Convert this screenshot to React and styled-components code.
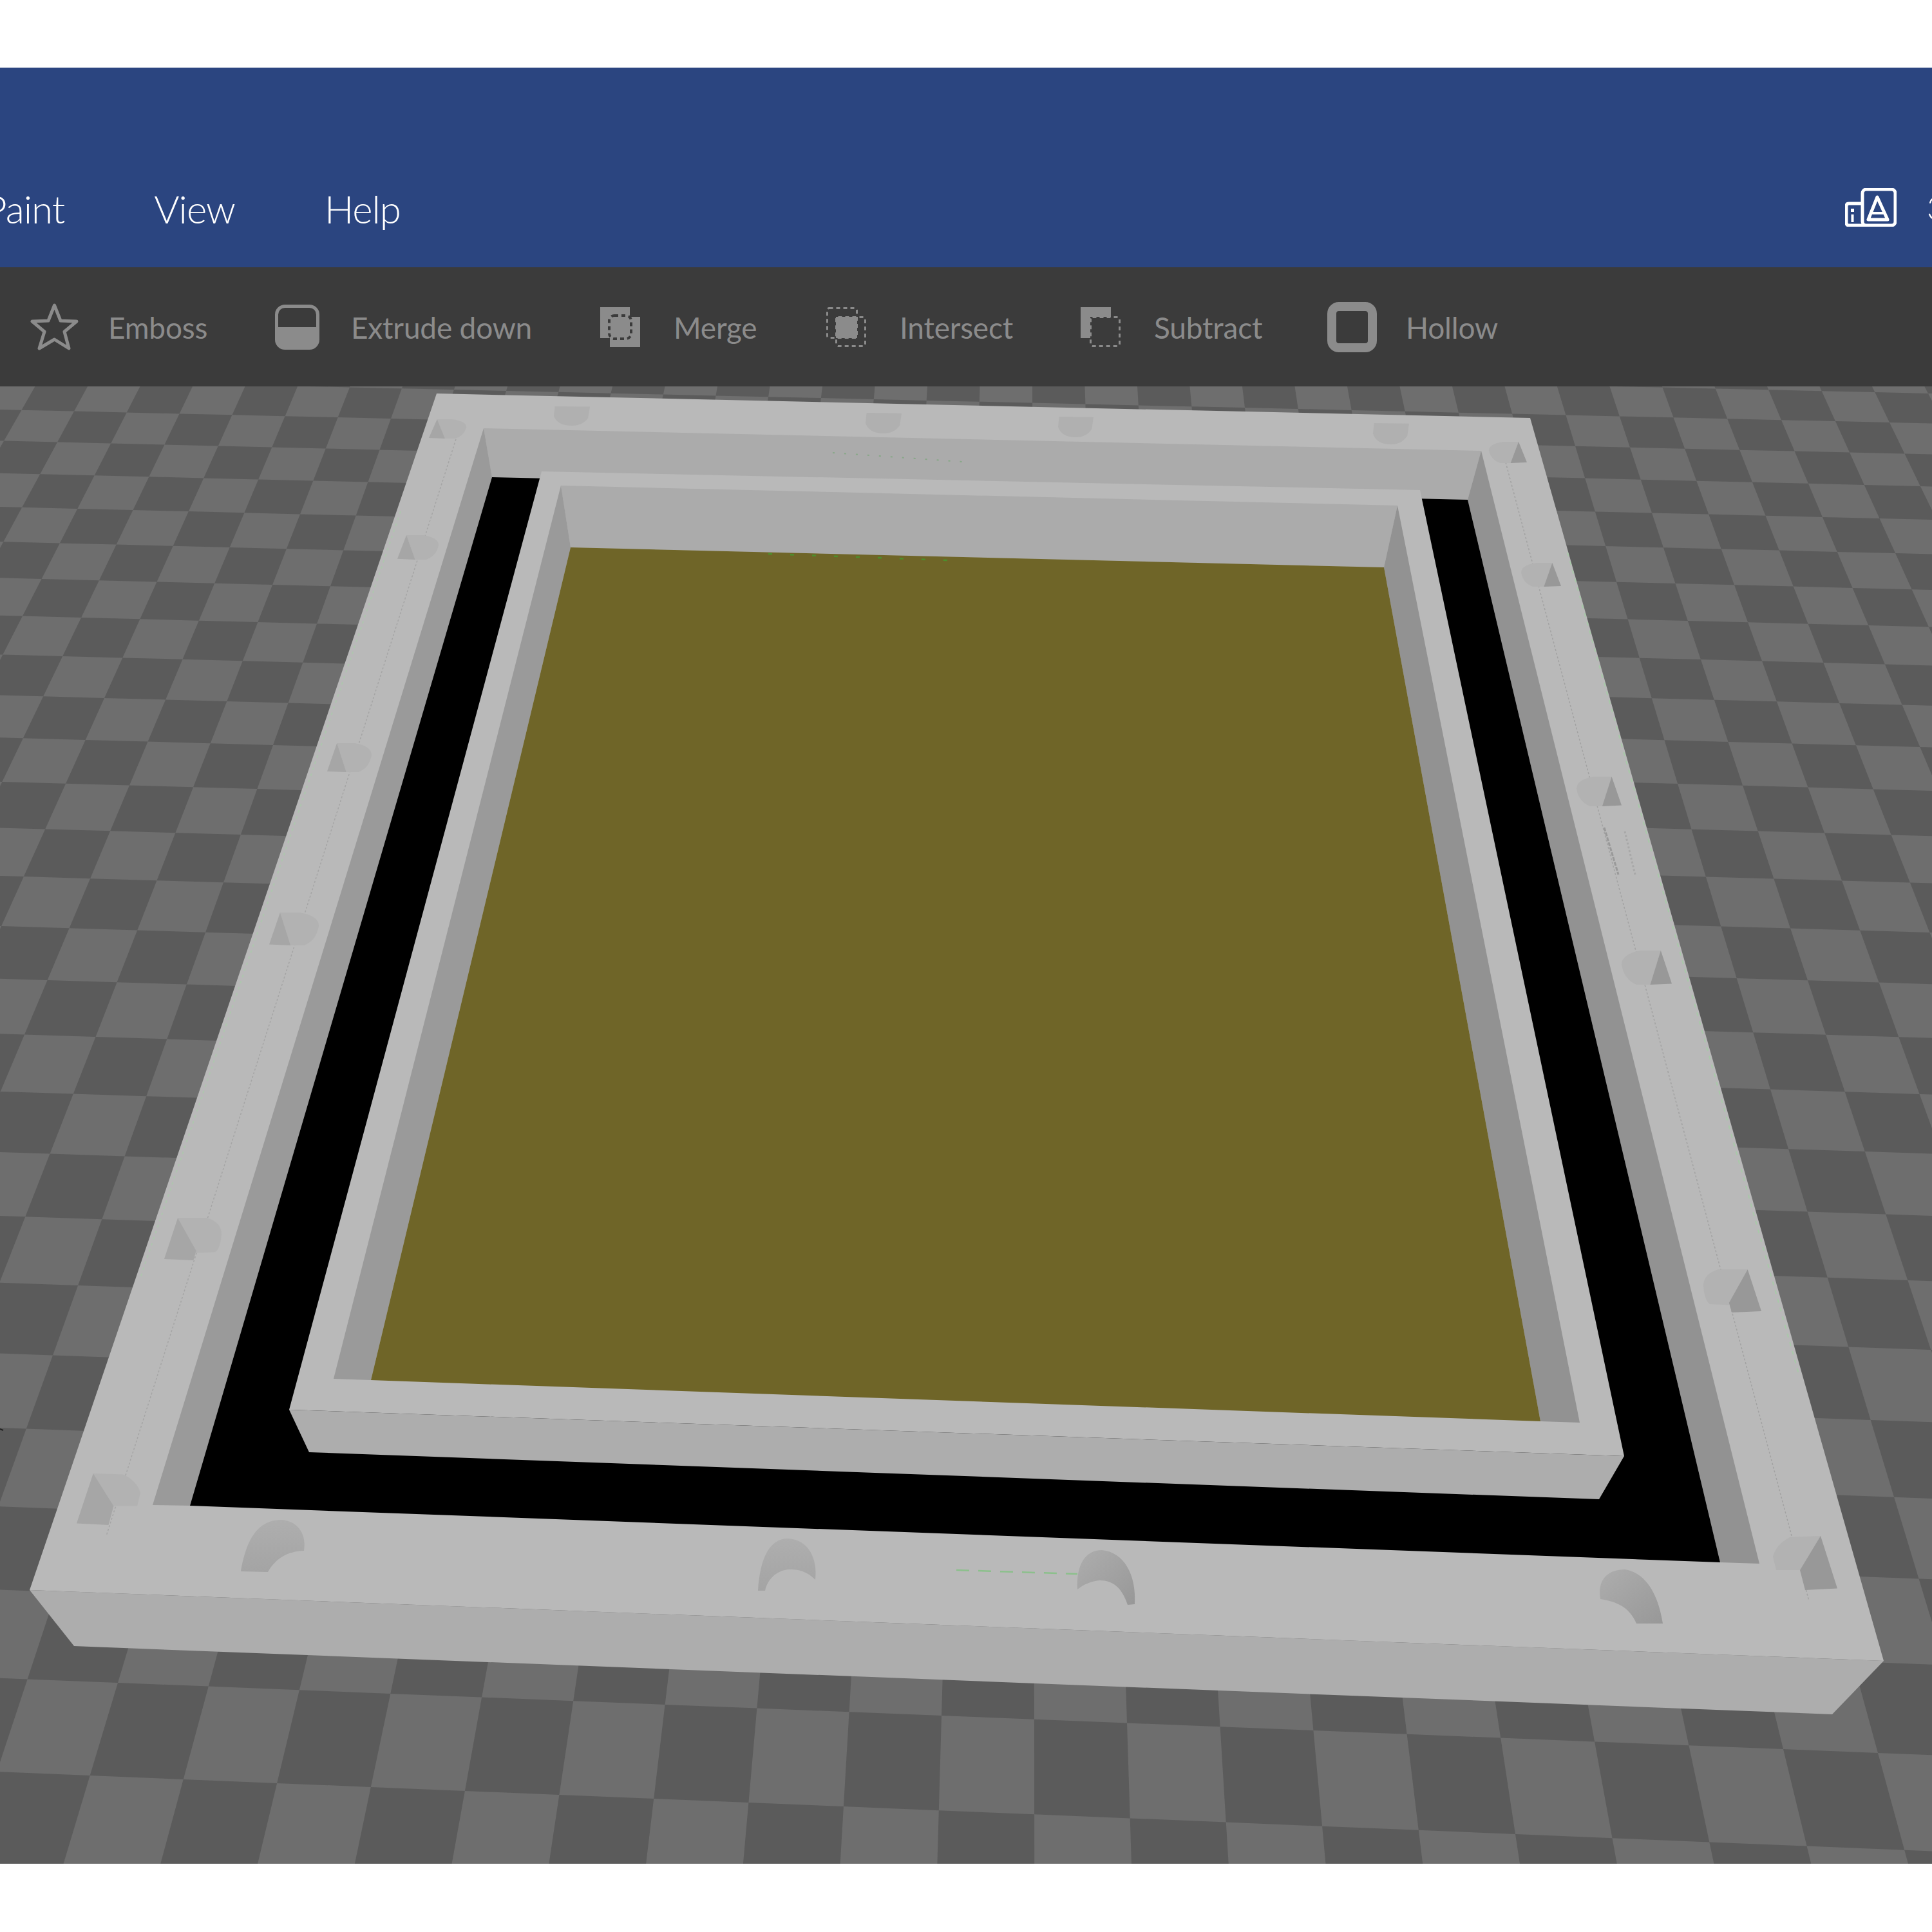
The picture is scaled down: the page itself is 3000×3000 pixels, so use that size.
import React from 'react';
import styled, { createGlobalStyle } from 'styled-components';

const GlobalStyle = createGlobalStyle`
  html, body {
    margin: 0;
    padding: 0;
    background: #ffffff;
  }
`;

const Page = styled.div`
  width: 3000px;
  height: 3000px;
  padding-top: 105px;
  box-sizing: border-box;
  overflow: hidden;
  background: #ffffff;
  font-family: "Lato", "Open Sans", "Liberation Sans", sans-serif;
`;

// Blue title + menu band
const MenuBar = styled.div`
  height: 310px;
  box-sizing: border-box;
  padding-top: 183px;
  background: #2b4580;
  display: flex;
  align-items: flex-start;
  color: #ffffff;
`;

const MenuItems = styled.div`
  display: flex;
  gap: 139px;
  margin-left: -24px;
`;

const MenuItem = styled.span`
  font-size: 60px;
  font-weight: 300;
  line-height: 72px;
  letter-spacing: -1px;
`;

const AppBadge = styled.div`
  margin-left: auto;
  margin-right: -92px;
  margin-top: 4px;
  display: flex;
  align-items: flex-start;
  gap: 47px;
`;

const AppBadgeIcon = styled.svg`
  width: 80px;
  height: 60px;
  display: block;
`;

const AppBadgeText = styled.span`
  font-size: 50px;
  font-weight: 300;
  line-height: 60px;
  width: 100px;
`;

// Dark tool strip
const Toolbar = styled.div`
  height: 185px;
  box-sizing: border-box;
  padding-left: 46px;
  background: #3b3b3b;
  display: flex;
  align-items: center;
  color: #8b8b8b;
`;

const Tool = styled.div`
  width: ${(p) => p.$slot}px;
  flex: none;
  display: flex;
  align-items: center;
  gap: ${(p) => p.$gap}px;
`;

const ToolLabel = styled.span`
  font-size: 46px;
  font-weight: 400;
  line-height: 60px;
  letter-spacing: -0.2px;
  padding-top: 2px;
`;

const ToolIcon = styled.svg`
  flex: none;
  display: block;
  width: ${(p) => p.$w}px;
  height: ${(p) => p.$h}px;
`;

const Viewport = styled.svg`
  display: block;
  width: 3000px;
  height: 2294px;
`;

// Floor grid: homography from grid (u, v) to screen, fitted on four measured corners
const solveHomography = (pairs) => {
  const m = [];
  pairs.forEach(([u, v, x, y]) => {
    m.push([u, v, 1, 0, 0, 0, -u * x, -v * x, x]);
    m.push([0, 0, 0, u, v, 1, -u * y, -v * y, y]);
  });
  for (let i = 0; i < 8; i++) {
    let best = i;
    for (let r = i + 1; r < 8; r++) if (Math.abs(m[r][i]) > Math.abs(m[best][i])) best = r;
    [m[i], m[best]] = [m[best], m[i]];
    for (let r = 0; r < 8; r++) {
      if (r === i) continue;
      const f = m[r][i] / m[i][i];
      for (let c = i; c < 9; c++) m[r][c] -= f * m[i][c];
    }
  }
  return m.map((row, i) => row[8] / row[i]);
};

const H = solveHomography([
  [0, 0, 183, 2613],
  [19, 0, 2916, 2722],
  [-2, 24, 607, 650],
  [26, 25, 2934, 656],
]);

const project = (u, v) => {
  const w = H[6] * u + H[7] * v + 1;
  return `${((H[0] * u + H[1] * v + H[2]) / w).toFixed(1)},${((H[3] * u + H[4] * v + H[5]) / w).toFixed(1)}`;
};

const darkCells = [];
for (let u = -14; u < 32; u++) {
  for (let v = -4; v < 28; v++) {
    if ((u + v + 400) % 2 === 1) {
      darkCells.push([project(u, v), project(u + 1, v), project(u + 1, v + 1), project(u, v + 1)].join(' '));
    }
  }
}

const TOP = '#b9b9b9';
const FRONT = '#adadad';
const LEFT_WALL = '#9a9a9a';
const RIGHT_WALL = '#929292';
const BACK_WALL = '#ababab';

const faces = [
  // outer frame
  [TOP, '678,611 2376,649 2925,2579 46,2469'],
  [FRONT, '46,2469 2925,2579 2845,2662 115,2556'],
  [BACK_WALL, '751,665 2300,700 2279,776 764,741'],
  [LEFT_WALL, '751,665 764,741 295,2338 237,2337'],
  [RIGHT_WALL, '2300,700 2279,776 2671,2426 2732,2428'],
  ['#000000', '764,741 2279,776 2671,2426 295,2338'],
  // inner tray
  [FRONT, '449,2189 2522,2261 2483,2328 480,2255'],
  [TOP, '841,732 2205,761 2522,2261 449,2189'],
  [BACK_WALL, '871,754 2170,785 2149,881 886,850'],
  [LEFT_WALL, '871,754 886,850 576,2143 518,2141'],
  [RIGHT_WALL, '2170,785 2149,881 2392,2207 2453,2209'],
  ['#6f6528', '886,850 2149,881 2392,2207 576,2143'],
];

// side notches: x, y, w, h, kind
const leftNotches = [
  [666, 651, 58, 30], [617, 831, 64, 38], [508, 1154, 69, 45], [418, 1417, 77, 51],
  [255, 1890, 89, 67, 'mid'], [119, 2288, 99, 80, 'deep'],
];
const rightNotches = [
  [2312, 686, 59, 33], [2362, 874, 62, 37], [2448, 1206, 70, 46], [2518, 1476, 78, 53],
  [2645, 1970, 90, 68, 'mid'], [2753, 2385, 100, 84, 'deep'],
];
const topNotches = [
  [860, 631, 56, 30], [1344, 641, 56, 32], [1643, 647, 55, 32], [2132, 657, 56, 33],
];

const NOTCH = {
  flat: {
    tri: '.22,0 .43,1 0,.97',
    cap: 'M.22 0 L.62 0 Q1 .1 1 .41 Q.95 .85 .7 1 L.43 1 Z',
  },
  mid: {
    tri: '.236,.02 .557,.78 .51,1 0,.97',
    cap: 'M.236 .02 L.75 .02 Q1 .12 1 .4 Q.98 .72 .89 .81 L.557 .83 Z',
  },
  deep: {
    tri: '.26,0 .58,.63 .5,1 0,.97',
    cap: 'M.26 0 L.73 .02 Q.95 .15 1 .38 L.95 .63 L.58 .63 Z',
  },
};

const Notch = ({ x, y, w, h, kind, mirror, triFill }) => {
  const shape = NOTCH[kind || 'flat'];
  const transform = mirror
    ? `translate(${x + w} ${y}) scale(${-w} ${h})`
    : `translate(${x} ${y}) scale(${w} ${h})`;
  return (
    <g transform={transform}>
      <path d={shape.cap} fill="#b2b2b2" />
      <polygon points={shape.tri} fill={triFill} />
    </g>
  );
};

const frontArches = [
  ['url(#archA)', 'M374 2440 C381 2400 395 2360 437 2360 C465 2362 476 2385 472 2408 C446 2409 428 2420 416 2441 Z'],
  ['url(#archA)', 'M1177 2470 C1180 2420 1195 2389 1223 2389 C1255 2390 1270 2420 1266 2453 C1250 2437 1235 2437 1223 2437 C1205 2440 1192 2452 1188 2470 Z'],
  ['url(#archB)', 'M1673 2468 C1671 2430 1685 2407 1711 2407 C1745 2410 1765 2445 1762 2491 L1751 2492 C1742 2465 1728 2454 1708 2454 C1695 2455 1683 2460 1673 2468 Z'],
  ['url(#archB)', 'M2485 2483 C2480 2455 2495 2437 2523 2437 C2555 2442 2575 2475 2582 2521 L2541 2521 C2530 2495 2510 2487 2485 2483 Z'],
];

const guideLines = [
  // [x1, y1, x2, y2, colour, width, dash]
  [708, 682, 165, 2385, '#a5a5a5', 1.5, '3 3'],
  [2338, 718, 2809, 2486, '#a2a2a2', 1.5, '3 3'],
  [622, 794, 217, 1987, '#aec6ae', 2, '4 6'],
  [2434, 858, 2794, 2137, '#a9c9a9', 2, '6 8'],
  [1485, 2438, 1673, 2444, '#8cc08c', 2.5, '20 14'],
  [1293, 703, 1507, 718, '#88a888', 2, '3 15'],
  [1193, 860, 1499, 871, '#4d8f2c', 2.5, '6 28'],
  [2491, 1285, 2513, 1358, '#999999', 3, '6 2'],
  [2523, 1291, 2539, 1358, '#a8a8a8', 3, '3 3'],
  [0, 2219, 5, 2221, '#222222', 2, 'none'],
];

const GREY = '#8b8b8b';
const BAR = '#3b3b3b';

const StarIcon = () => (
  <ToolIcon $w={77} $h={75} viewBox="0 0 77 75">
    <polygon
      points="38.5,4 48,28 73,29 54,45 61,71 38.5,57 15,71 23,45 4,29 29,28"
      fill="none"
      stroke={GREY}
      strokeWidth="5"
      strokeLinejoin="round"
    />
  </ToolIcon>
);

const ExtrudeIcon = () => (
  <ToolIcon $w={69} $h={70} viewBox="0 0 69 70">
    <path d="M2 35 H67 V56 Q67 68 55 68 H14 Q2 68 2 56 Z" fill={GREY} />
    <rect x="2.5" y="2.5" width="64" height="65" rx="13" fill="none" stroke={GREY} strokeWidth="5" />
  </ToolIcon>
);

const MergeIcon = () => (
  <ToolIcon $w={62} $h={62} viewBox="0 0 62 62">
    <rect x="0" y="0" width="46" height="48" fill={GREY} />
    <rect x="15" y="15" width="47" height="47" fill={GREY} />
    <rect x="14" y="13" width="34" height="36" rx="8" fill="none" stroke={BAR} strokeWidth="4" strokeDasharray="6 5" />
  </ToolIcon>
);

const IntersectIcon = () => (
  <ToolIcon $w={62} $h={62} viewBox="0 0 62 62">
    <rect x="15" y="15" width="33" height="33" fill={GREY} />
    <rect x="1.5" y="1.5" width="46" height="46" rx="3" fill="none" stroke={GREY} strokeWidth="3" strokeDasharray="6 5" />
    <rect x="15.5" y="15.5" width="45" height="45" rx="3" fill="none" stroke={GREY} strokeWidth="3" strokeDasharray="6 5" />
  </ToolIcon>
);

const SubtractIcon = () => (
  <ToolIcon $w={62} $h={62} viewBox="0 0 62 62">
    <path d="M0 0 H47 V15 H15 V48 H0 Z" fill={GREY} />
    <rect x="15.5" y="15.5" width="45" height="45" rx="3" fill="none" stroke={GREY} strokeWidth="3" strokeDasharray="6 5" />
  </ToolIcon>
);

const HollowIcon = () => (
  <ToolIcon $w={77} $h={78} viewBox="0 0 77 78">
    <rect x="7" y="7" width="63" height="64" rx="11" fill="none" stroke={GREY} strokeWidth="14" />
  </ToolIcon>
);

const tools = [
  { label: 'Emboss', icon: <StarIcon />, slot: 381, gap: 45 },
  { label: 'Extrude down', icon: <ExtrudeIcon />, slot: 505, gap: 49 },
  { label: 'Merge', icon: <MergeIcon />, slot: 351, gap: 52 },
  { label: 'Intersect', icon: <IntersectIcon />, slot: 395, gap: 52 },
  { label: 'Subtract', icon: <SubtractIcon />, slot: 383, gap: 52 },
  { label: 'Hollow', icon: <HollowIcon />, slot: 400, gap: 45 },
];

const App = () => (
  <Page>
    <GlobalStyle />
    <MenuBar>
      <MenuItems>
        <MenuItem>Paint</MenuItem>
        <MenuItem>View</MenuItem>
        <MenuItem>Help</MenuItem>
      </MenuItems>
      <AppBadge>
        <AppBadgeIcon viewBox="0 0 80 60">
          <rect x="27" y="2" width="51" height="56" rx="6" fill="none" stroke="#ffffff" strokeWidth="5" />
          <path d="M27 24 H6 Q2 24 2 28 V54 Q2 58 6 58 H30" fill="none" stroke="#ffffff" strokeWidth="5" />
          <rect x="9" y="32" width="5" height="5" fill="#ffffff" />
          <rect x="9.5" y="41" width="4" height="12" fill="#ffffff" />
          <path d="M50 14 L36 49 H66 Z" fill="none" stroke="#ffffff" strokeWidth="5" strokeLinejoin="round" />
          <path d="M42 39 H60" stroke="#ffffff" strokeWidth="4" />
        </AppBadgeIcon>
        <AppBadgeText>3D</AppBadgeText>
      </AppBadge>
    </MenuBar>
    <Toolbar>
      {tools.map((tool) => (
        <Tool key={tool.label} $slot={tool.slot} $gap={tool.gap}>
          {tool.icon}
          <ToolLabel>{tool.label}</ToolLabel>
        </Tool>
      ))}
    </Toolbar>
    <Viewport viewBox="0 600 3000 2294">
      <defs>
        <linearGradient id="archA" x1="0" y1="0" x2="0" y2="1">
          <stop offset="0" stopColor="#aeaeae" />
          <stop offset="1" stopColor="#a4a4a4" />
        </linearGradient>
        <linearGradient id="archB" x1="0" y1="0" x2="1" y2="1">
          <stop offset="0" stopColor="#adadad" />
          <stop offset="1" stopColor="#989898" />
        </linearGradient>
      </defs>
      <rect x="0" y="600" width="3000" height="2294" fill="#6e6e6e" />
      {darkCells.map((points, i) => (
        <polygon key={i} points={points} fill="#5b5b5b" />
      ))}
      {faces.map(([fill, points], i) => (
        <polygon key={i} points={points} fill={fill} />
      ))}
      {guideLines.map(([x1, y1, x2, y2, stroke, width, dash], i) => (
        <line key={i} x1={x1} y1={y1} x2={x2} y2={y2} stroke={stroke} strokeWidth={width} strokeDasharray={dash} />
      ))}
      {topNotches.map(([x, y, w, h], i) => (
        <path
          key={i}
          transform={`translate(${x} ${y}) scale(${w} ${h})`}
          d="M.03 0 L1 .02 L.95 .6 Q.8 1 .5 1 Q.1 1 0 .5 Z"
          fill="#b0b0b0"
        />
      ))}
      {leftNotches.map(([x, y, w, h, kind], i) => (
        <Notch key={i} x={x} y={y} w={w} h={h} kind={kind} triFill="#a6a6a6" />
      ))}
      {rightNotches.map(([x, y, w, h, kind], i) => (
        <Notch key={i} x={x} y={y} w={w} h={h} kind={kind} mirror triFill="#989898" />
      ))}
      {frontArches.map(([fill, d], i) => (
        <path key={i} d={d} fill={fill} />
      ))}
    </Viewport>
  </Page>
);

export default App;
